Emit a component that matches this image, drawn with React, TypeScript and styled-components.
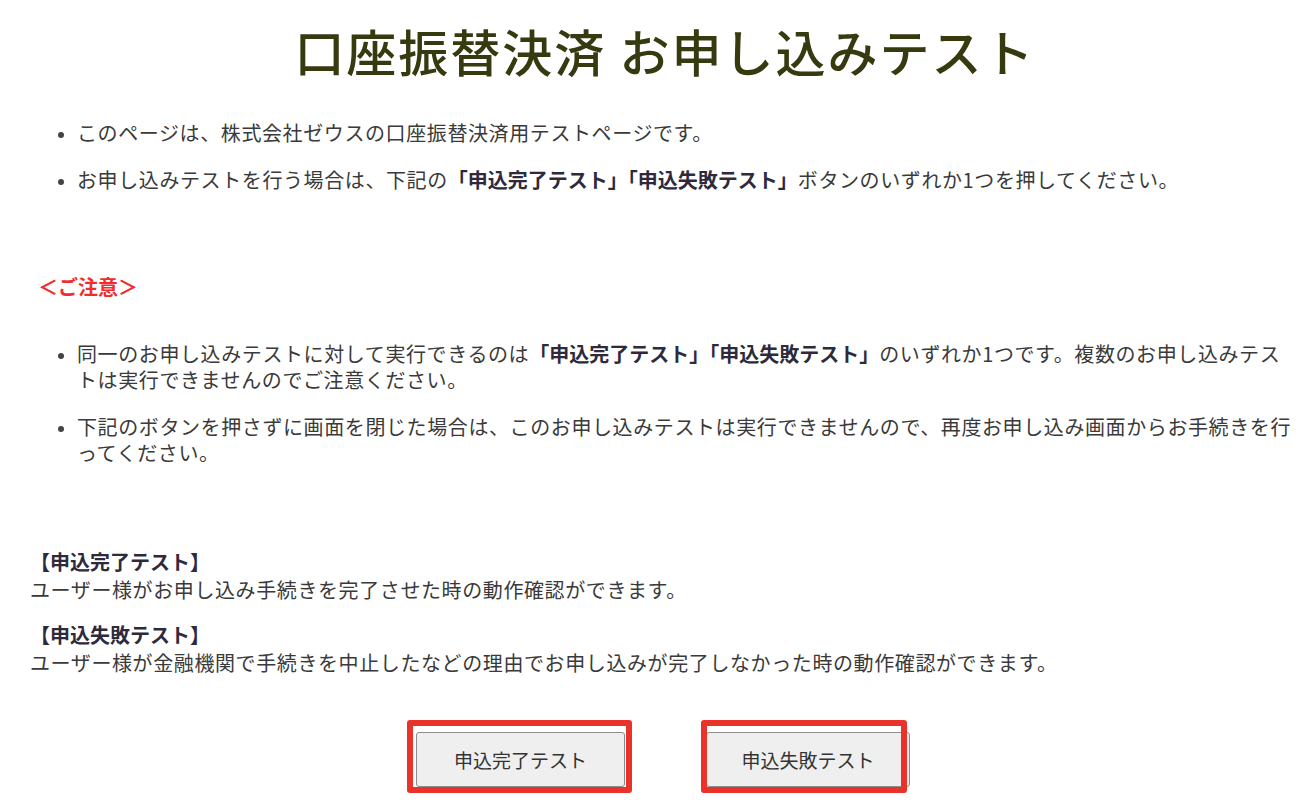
import React from 'react'
import styled, { createGlobalStyle } from 'styled-components'

const GlobalStyle = createGlobalStyle`
  html, body {
    margin: 0;
    padding: 0;
    background: #ffffff;
  }
  body {
    font-family: "Noto Sans CJK JP", "Noto Sans", sans-serif;
    color: #3a3a3a;
  }
`

// layout
const Page = styled.div`
  width: 1316px;
  padding: 20px 0 0 0;
  box-sizing: border-box;
`

const Title = styled.h1`
  margin: 0;
  text-align: center;
  font-size: 50px;
  line-height: 60px;
  font-weight: 500;
  letter-spacing: 2px;
  color: #37390f;
  padding-left: 14px;
`

const BulletList = styled.ul<{ $top: number }>`
  margin: ${(p) => p.$top}px 0 0 0;
  padding: 0 0 0 77px;
  width: 1300px;
  box-sizing: border-box;
  list-style: disc;
`

const Bullet = styled.li`
  font-size: 20px;
  line-height: 26px;
  letter-spacing: 0.6px;
  margin-bottom: 21px;

  &:last-child {
    margin-bottom: 0;
  }

  &::marker {
    font-size: 16px;
    color: #444444;
  }
`

const Strong = styled.b`
  font-weight: 700;
  letter-spacing: 0;
  color: #2e2a3c;
`

const Notice = styled.p`
  margin: 81px 0 0 38px;
  font-size: 20px;
  line-height: 26px;
  font-weight: 700;
  color: #f02c2c;
`

const Guide = styled.section`
  margin: 82px 0 0 30px;
`

const GuideHeading = styled.h3<{ $first?: boolean }>`
  margin: ${(p) => (p.$first ? 0 : 17)}px 0 0 0;
  font-size: 20px;
  line-height: 28px;
  font-weight: 700;
  color: #2e2a3c;
`

const GuideText = styled.p`
  margin: 0;
  font-size: 20px;
  line-height: 28px;
  letter-spacing: 0.6px;
`

const ButtonRow = styled.div`
  display: flex;
  justify-content: center;
  gap: 81px;
  margin-top: 55px;
  padding: 0 0 13px 10px;
`

const ButtonSlot = styled.div`
  position: relative;
  display: flex;
`

const TestButton = styled.button<{ $width: number }>`
  width: ${(p) => p.$width}px;
  height: 55px;
  font-family: "Noto Sans CJK JP", "Noto Sans", sans-serif;
  font-size: 19px;
  color: #333333;
  background: #efefef;
  border: 1px solid #8d8d8d;
  border-radius: 3px;
  cursor: pointer;

  &:hover {
    background: #e5e5e5;
  }
`

// red annotation box laid over a button
const Highlight = styled.div<{ $l: number; $r: number }>`
  position: absolute;
  top: -12px;
  left: ${(p) => p.$l}px;
  width: calc(100% - ${(p) => p.$l + p.$r}px);
  height: 73px;
  box-sizing: border-box;
  border: 6px solid #e8322a;
  border-radius: 3px;
  pointer-events: none;
`

const App = () => {
  return (
    <>
      <GlobalStyle />
      <Page lang="ja">
        <Title>口座振替決済 お申し込みテスト</Title>

        <BulletList $top={40}>
          <Bullet>このページは、株式会社ゼウスの口座振替決済用テストページです。</Bullet>
          <Bullet>
            お申し込みテストを行う場合は、下記の<Strong>「申込完了テスト」「申込失敗テスト」</Strong>
            ボタンのいずれか1つを押してください。
          </Bullet>
        </BulletList>

        <Notice>＜ご注意＞</Notice>

        <BulletList $top={41}>
          <Bullet>
            同一のお申し込みテストに対して実行できるのは<Strong>「申込完了テスト」「申込失敗テスト」</Strong>
            のいずれか1つです。複数のお申し込みテストは実行できませんのでご注意ください。
          </Bullet>
          <Bullet>
            下記のボタンを押さずに画面を閉じた場合は、このお申し込みテストは実行できませんので、再度お申し込み画面からお手続きを行ってください。
          </Bullet>
        </BulletList>

        <Guide>
          <GuideHeading $first>【申込完了テスト】</GuideHeading>
          <GuideText>ユーザー様がお申し込み手続きを完了させた時の動作確認ができます。</GuideText>
          <GuideHeading>【申込失敗テスト】</GuideHeading>
          <GuideText>
            ユーザー様が金融機関で手続きを中止したなどの理由でお申し込みが完了しなかった時の動作確認ができます。
          </GuideText>
        </Guide>

        <ButtonRow>
          <ButtonSlot>
            <TestButton $width={209}>申込完了テスト</TestButton>
            <Highlight $l={-9} $r={-7} />
          </ButtonSlot>
          <ButtonSlot>
            <TestButton $width={204}>申込失敗テスト</TestButton>
            <Highlight $l={-5} $r={3} />
          </ButtonSlot>
        </ButtonRow>
      </Page>
    </>
  )
}

export default App
